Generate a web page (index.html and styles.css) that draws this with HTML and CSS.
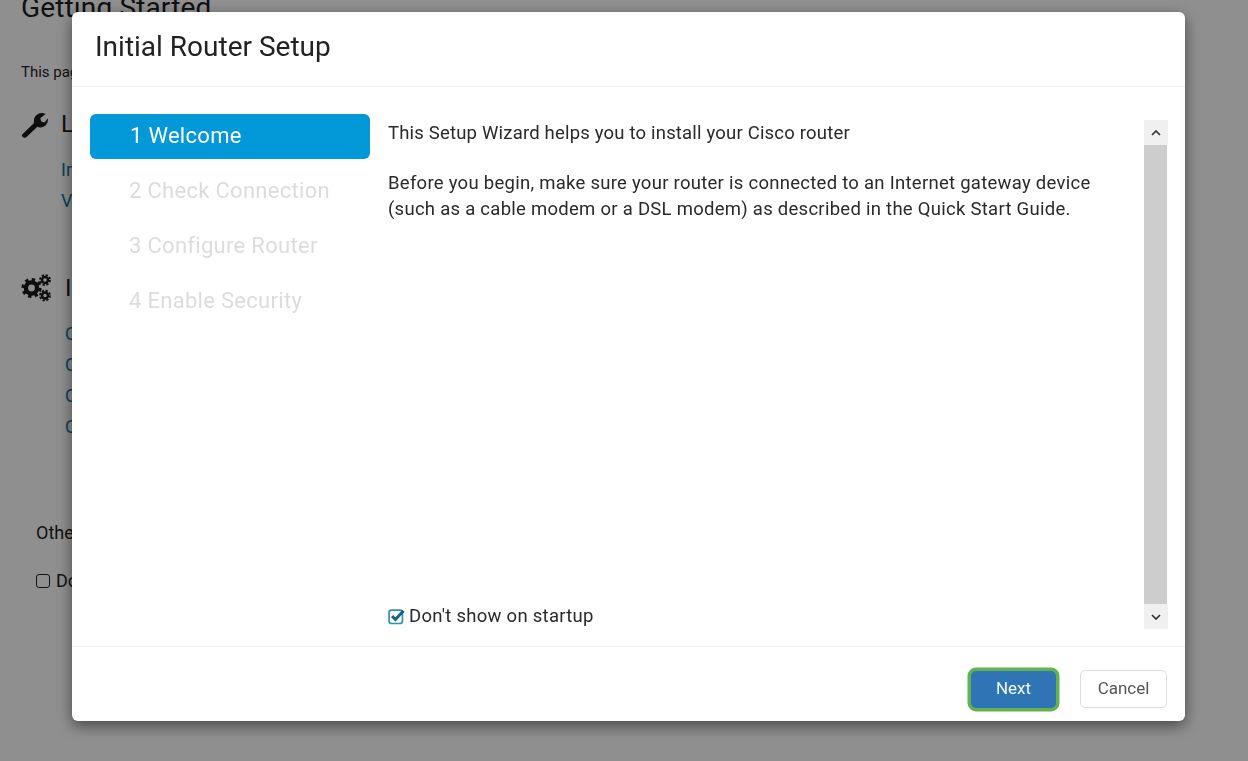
FILE: index.html
```html
<!DOCTYPE html>
<html lang="en">
<head>
<meta charset="utf-8">
<title>Initial Router Setup</title>
<link rel="stylesheet" href="styles.css">
</head>
<body>
<main class="page">
  <h1 class="page-title">Getting Started</h1>
  <p class="page-intro">This page</p>
  <section class="group group-first">
    <h2 class="group-head">
      <svg class="icon-wrench" viewBox="0 0 28 28"><path d="M1.5 24 L13.5 12.5 C12.5 7.5 15.5 2.5 21 2 C22.5 1.8 24 2.2 25.5 3 L20 7.5 L21 11 L24.5 12 L27.8 7.5 C28.5 13 25 17 20.5 17.2 C19 17.2 18 17 17 16.4 L6 26.8 C4.8 28 3 28 1.8 27 C0.6 26 0.5 25 1.5 24 Z" fill="#1a1a1a"/></svg>
      <span>L</span>
    </h2>
    <a class="link">In</a>
    <a class="link">V</a>
  </section>
  <section class="group group-second">
    <h2 class="group-head">
      <svg class="icon-gears" viewBox="0 0 30 28"><g fill="none" stroke="#1a1a1a"><circle cx="10.5" cy="14" r="5.6" stroke-width="4.4"/><circle cx="10.5" cy="14" r="8.6" stroke-width="3" stroke-dasharray="3.4 3.35"/><circle cx="24" cy="6" r="3" stroke-width="2.4"/><circle cx="24" cy="6" r="4.9" stroke-width="2" stroke-dasharray="2.2 1.65"/><circle cx="24" cy="21.5" r="3" stroke-width="2.4"/><circle cx="24" cy="21.5" r="4.9" stroke-width="2" stroke-dasharray="2.2 1.65"/></g></svg>
      <span>I</span>
    </h2>
    <a class="link link-tight">C</a>
    <a class="link link-tight">C</a>
    <a class="link link-tight">C</a>
    <a class="link link-tight">C</a>
  </section>
  <p class="other">Other</p>
  <p class="dont"><span class="box"></span><span>Do</span></p>
</main>

<div class="backdrop"></div>

<div class="modal">
  <header class="modal-head">
    <h3 class="modal-title">Initial Router Setup</h3>
  </header>
  <div class="modal-body">
    <ol class="steps">
      <li class="step step-active">1 Welcome</li>
      <li class="step">2 Check Connection</li>
      <li class="step">3 Configure Router</li>
      <li class="step">4 Enable Security</li>
    </ol>
    <div class="content">
      <div class="content-text">
        <p class="lead">This Setup Wizard helps you to install your Cisco router</p>
        <p class="para">Before you begin, make sure your router is connected to an Internet gateway device<br>(such as a cable modem or a DSL modem) as described in the Quick Start Guide.</p>
        <label class="startup">
          <svg class="check" viewBox="0 0 16 16"><rect x="1" y="2" width="12.6" height="12.6" rx="2.4" fill="none" stroke="#2f8fb5" stroke-width="1.6"/><path d="M3.8 7.6 L7 10.8 L14.6 2.6" fill="none" stroke="#17608a" stroke-width="2.8"/></svg>
          <span>Don't show on startup</span>
        </label>
      </div>
      <div class="scrollbar">
        <div class="arrow"><svg viewBox="0 0 10 6"><path d="M1 5 L5 1 L9 5" fill="none" stroke="#333" stroke-width="1.7"/></svg></div>
        <div class="thumb"></div>
        <div class="arrow"><svg viewBox="0 0 10 6"><path d="M1 1 L5 5 L9 1" fill="none" stroke="#333" stroke-width="1.7"/></svg></div>
      </div>
    </div>
  </div>
  <footer class="modal-foot">
    <button class="btn btn-primary">Next</button>
    <button class="btn btn-cancel">Cancel</button>
  </footer>
</div>
</body>
</html>
```
FILE: styles.css
```css
* { box-sizing: border-box; }
html, body { margin: 0; height: 100%; overflow: hidden; }
body { font-family: Roboto, "Liberation Sans", sans-serif; color: #1d1d1d; background: #fff; }

.page { padding: 0 0 0 21px; height: 761px; }
.page-title { margin: -8px 0 0; font-size: 28px; line-height: 32px; font-weight: 400; letter-spacing: 0.15px; }
.page-intro { margin: 38px 0 0; font-size: 15px; line-height: 20px; }
.group-head { display: flex; align-items: center; margin: 0; font-size: 24px; line-height: 30px; font-weight: 400; }
.group-first { margin-top: 27px; }
.group-first .group-head { gap: 13px; }
.group-second { margin-top: 58px; }
.group-second .group-head { gap: 14px; }
.icon-wrench { width: 27px; height: 27px; }
.icon-gears { width: 30px; height: 28px; }
.link { display: block; margin-left: 40px; margin-top: 3px; font-size: 18px; line-height: 28px; color: #0f76a8; }
.group-first .link:first-of-type { margin-top: 17px; }
.link-tight { margin-left: 44px; line-height: 28px; }
.group-second .link:first-of-type { margin-top: 17px; }
.other { margin: 80px 0 0 15px; font-size: 18px; line-height: 24px; }
.dont { display: flex; align-items: center; gap: 6px; margin: 24px 0 0 15px; font-size: 18px; line-height: 24px; }
.box { width: 14px; height: 14px; border: 1.6px solid #222; border-radius: 3px; }

.backdrop { position: fixed; inset: 0; background: rgba(0, 0, 0, 0.44); }

.modal {
  position: fixed; left: 72px; top: 12px; width: 1113px; height: 709px;
  display: flex; flex-direction: column;
  background: #fff; border-radius: 6px;
  box-shadow: 0 5px 15px rgba(0, 0, 0, 0.5);
}
.modal-head { height: 75px; padding: 15px 23px 0; border-bottom: 1px solid #efefef; }
.modal-title { margin: 0; font-size: 28px; line-height: 40px; font-weight: 400; color: #222; }
.modal-body { flex: 1; min-height: 0; display: flex; padding: 27px 17px 17px 18px; }
.steps { list-style: none; margin: 0; padding: 0; width: 280px; flex: none; font-size: 22px; letter-spacing: 0.3px; }
.step { height: 45px; margin-bottom: 10px; padding-left: 39px; line-height: 44px; color: #dcdcdc; white-space: nowrap; }
.step-active { padding-left: 40px; background: #0398d8; color: #fff; border-radius: 6px; }
.content { flex: 1; display: flex; padding: 6px 0 0 18px; min-width: 0; }
.content-text { flex: 1; display: flex; flex-direction: column; font-size: 18.5px; letter-spacing: 0.27px; line-height: 26px; color: #2a2a2a; }
.lead, .para { margin: 0; }
.lead { letter-spacing: 0.19px; }
.para { margin-top: 24px; }
.startup { margin-top: auto; display: flex; align-items: center; gap: 4px; }
.check { width: 17px; height: 17px; }
.scrollbar { width: 24px; flex: none; display: flex; flex-direction: column; }
.arrow { height: 25px; background: #f0f0f0; display: flex; align-items: center; justify-content: center; }
.arrow svg { width: 10px; height: 6px; }
.thumb { flex: 1; background: #cdcdcd; margin-right: 1px; }

.modal-foot { height: 75px; flex: none; display: flex; justify-content: flex-end; align-items: flex-start; gap: 24px; padding: 23px 18px 0; border-top: 1px solid #efefef; }
.btn { height: 38px; font-family: inherit; font-size: 17px; border-radius: 5px; padding: 0 0 3px; }
.btn-primary { width: 85px; height: 37px; margin-top: 1px; background: #2f74b5; color: #f2f7fb; border: none; box-shadow: 0 0 0 3.5px #62b24f; }
.btn-cancel { width: 87px; background: #fff; color: #555; border: 1px solid #ddd; }
```
